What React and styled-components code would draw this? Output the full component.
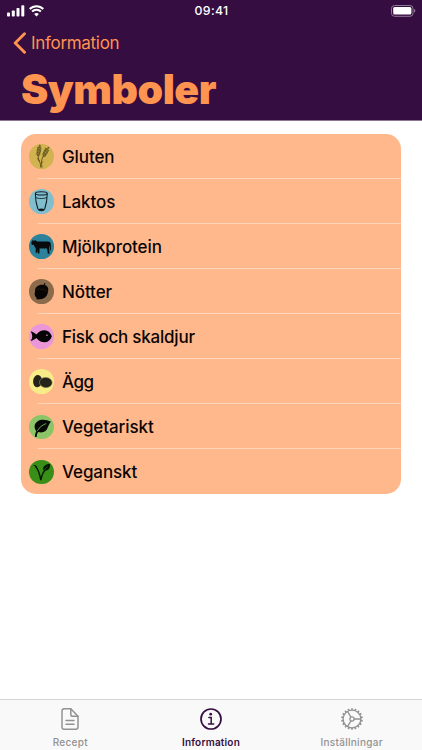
import React from "react";
import styled, { createGlobalStyle } from "styled-components";

const GlobalStyle = createGlobalStyle`
  * {
    box-sizing: border-box;
  }

  body {
    margin: 0;
    background: #fff;
    font-family: Inter, "Liberation Sans", sans-serif;
  }
`;

const Screen = styled.div`
  width: 100%;
  height: 100vh;
  display: flex;
  flex-direction: column;
  overflow: hidden;
`;

const Header = styled.header`
  height: 121px;
  flex: none;
  background: #350d40;
  border-bottom: 1px solid #8c7792;
`;

const StatusBar = styled.div`
  height: 21px;
  padding: 0 6px 0 7px;
  display: grid;
  grid-template-columns: 1fr auto 1fr;
  align-items: center;
  color: #fff;

  svg {
    display: block;
  }
`;

const Signal = styled.div`
  display: flex;
  gap: 4px;
`;

const Time = styled.span`
  padding-top: 1px;
  font-size: 12.3px;
  line-height: 20px;
  font-weight: 500;
  letter-spacing: 0.3px;
`;

const Battery = styled.div`
  display: flex;
  justify-content: flex-end;
`;

const BackButton = styled.button`
  height: 44px;
  padding: 0 0 0 13px;
  border: 0;
  background: none;
  display: flex;
  align-items: center;
  gap: 4px;
  color: #ff9350;
  font-family: inherit;
  font-size: 17px;
  letter-spacing: -0.3px;
`;

const Title = styled.h1`
  margin: 0;
  padding-left: 21px;
  color: #ff9350;
  font-size: 41px;
  line-height: 49px;
  font-weight: 900;
  letter-spacing: -0.5px;
`;

const Content = styled.main`
  flex: 1;
  padding: 13px 21px;
`;

const List = styled.ul`
  margin: 0;
  padding: 0;
  list-style: none;
  background: #ffb88c;
  border-radius: 15px;
  overflow: hidden;
`;

const Row = styled.li`
  height: 45.05px;
  padding-left: 8px;
  display: flex;
  align-items: center;
`;

const Symbol = styled.span`
  width: 24.6px;
  height: 24.6px;
  flex: none;
  border-radius: 50%;
  background: ${(props) => props.$color};

  svg {
    display: block;
  }
`;

const Label = styled.span`
  margin-left: 8.4px;
  color: #0b0504;
  font-size: 17px;
  font-weight: 450;
  letter-spacing: ${(props) => props.$spacing || "-0.1px"};
  white-space: nowrap;
`;

const Divider = styled.li`
  height: 1px;
  margin: -1px 0 0 17px;
  background: #ffd6bb;
`;

const TabBar = styled.nav`
  height: 51px;
  flex: none;
  display: grid;
  grid-template-columns: repeat(3, 1fr);
  background: #f9f9f9;
  border-top: 1px solid #d5d5d5;
`;

const Tab = styled.div`
  padding-top: 7px;
  display: flex;
  flex-direction: column;
  align-items: center;
  color: ${(props) => (props.$active ? "#350d40" : "#929292")};
`;

const TabLabel = styled.span`
  margin-top: 4px;
  font-size: 10px;
  line-height: 14px;
  font-weight: ${(props) => (props.$bold ? 600 : 500)};
  letter-spacing: ${(props) => props.$spacing};
`;

const Svg = ({ size = 24, children }) => (
  <svg width={size} height={size} viewBox="0 0 24 24" fill="none">
    {children}
  </svg>
);

const wheatGrains = [
  [10.4, 2.4, 12],
  [8.9, 4.5, -6],
  [10.9, 5, 24],
  [8.5, 7.1, -6],
  [10.5, 7.7, 24],
  [8.1, 9.7, -6],
  [9.8, 10.3, 24],
  [18.3, 4.4, 38],
  [16.2, 5.5, 14],
  [18, 7.1, 56],
  [15.1, 7.6, 14],
  [16.7, 9.4, 56],
  [14.1, 9.9, 14],
  [15.3, 11.5, 56],
];

const Wheat = () => (
  <Svg size={24.6}>
    {wheatGrains.map(([x, y, angle]) => (
      <ellipse
        key={`${x}-${y}`}
        cx={x}
        cy={y}
        rx="0.6"
        ry="1.6"
        fill="#9a8a3a"
        stroke="#3d3610"
        strokeWidth="0.45"
        transform={`rotate(${angle} ${x} ${y})`}
      />
    ))}
    <path
      d="M9 11.500c-.2 3 .9 4.500 1.700 6.500.5 1.500.6 3 .7 5M13.700 12c-1.100 2.600-1.700 4.500-1.500 7l.5 4M8.300 14l1.800 3M13.700 17l-1.500 1.800"
      stroke="#3d3610"
      strokeWidth="0.7"
    />
  </Svg>
);

const Glass = () => (
  <Svg size={24.6}>
    <g stroke="#0b1a20" strokeWidth="1">
      <ellipse cx="12" cy="4.300" rx="5.800" ry="1.600" />
      <path d="M6.200 4.300c0 5.500.9 10.500 2.500 15.200.4 1.400 1.300 1.700 3.300 1.700s2.900-.3 3.300-1.700c1.600-4.700 2.500-9.700 2.500-15.200" />
      <path d="M6.600 8c.9 1.700 9.900 1.700 10.800 0" strokeWidth="0.8" />
      <path d="M9.200 20c1.500-1 4.100-1 5.600 0l-.8 1H10z" fill="#0b1a20" strokeWidth="0.4" />
    </g>
  </Svg>
);

const Cow = () => (
  <Svg size={24.6}>
    <path
      fill="#070b0d"
      d="M1.900 8l1.500-.6-.7-1.500 1.900.8 1.800-.7 1.500 1.200 10.400.1c1.900 0 2.700.8 2.900 2.300l.2 5.200-.8 1.900-.4-6-.5 3 .3 5.500h-1.700l-.4-3.900-1.500-2.200-.8 1.600-1.400-.8c-1.300.5-2.600.4-3.800 0l-.3 5.200H8.500l-.2-3.400-.5 2.500H6.500l.1-4.600C5.400 12.700 5 11.700 4.800 10.500l-1.500.3-1-.8.4-1.300z"
    />
  </Svg>
);

const Nut = () => (
  <Svg size={24.6}>
    <path
      fill="#070503"
      d="M16.200 4.300c-.6.700-.7 1.300-.4 1.900 1.800.6 2.900 1.900 3 3.600.1 2-.3 4.500-1.600 6.500-1.500 2.200-3.900 3.300-6.600 3.500l-2.900.3-.5-1.700c-1.600-1.700-2.100-4.100-1.300-6.300-.5-2.400 1.200-4.900 4.100-6 1.600-.6 3.100-.6 4.400-.2.100-.8.400-1.500.8-2.100z"
    />
    <path d="M6.500 11.700c.9-2.300 2.900-2.500 4.900-1.500 2.500-.6 4.900.2 6.600 2.300" stroke="#3a2c1f" strokeWidth="0.45" />
  </Svg>
);

const Fish = () => (
  <Svg size={24.6}>
    <path
      fill="#050305"
      d="M1.600 7.100c2 .6 4 1.900 5.600 3.100 2-2.700 4.700-4.200 8.100-4.200 3.100 0 5.600 2 7 6-1.400 4-3.900 5.900-7 5.900-3.300 0-6-1.500-8.100-4.200-1.500 1.300-3.500 2.400-5.600 3 .9-1.600 1.500-3 1.600-4.700-.1-1.600-.7-3.300-1.600-4.900z"
    />
    <circle cx="17.500" cy="11" r="0.800" fill="#ea96d9" />
  </Svg>
);

const Eggs = () => (
  <Svg size={24.6}>
    <ellipse cx="8.400" cy="11.900" rx="4.400" ry="6" fill="#25221a" transform="rotate(6 8.400 11.900)" />
    <ellipse
      cx="16.400"
      cy="13.200"
      rx="6.200"
      ry="5"
      fill="#25221a"
      stroke="#8b875c"
      strokeWidth="0.600"
      transform="rotate(5 16.400 13.200)"
    />
  </Svg>
);

const Leaf = () => (
  <Svg size={24.6}>
    <path
      fill="#050805"
      d="M21.500 6.700c-1.700 1.700-2.400 3.400-3.200 5.600-1.500 4.300-5.100 5.500-9.400 4.300-.8 1.100-1.300 2.800-1.300 4.700l-1.800.2c-.1-2.200.4-4.200 1.400-5.700-2.700-3.400-2.200-7.500 1.300-9.800 3.300-2.100 8.600-1.700 13 .7z"
    />
    <path d="M8.200 15.300c2-3.300 4.800-5.600 8.500-6.900" stroke="#8bc567" strokeWidth="0.8" />
  </Svg>
);

const Sprout = () => (
  <Svg size={24.6}>
    <path d="M6.200 6c2.200 2.200 4.300 7.200 5.300 13.600 1-4.700 2.200-8.200 4.600-10.400" stroke="#071705" strokeWidth="1.400" />
    <path d="M4.500 5.400c1.300-.2 2.400.2 3 1.500" stroke="#071705" strokeWidth="1" />
    <path fill="#071705" d="M20.600 3.700c.2 4.100-1.100 6.900-5.500 6.700l-1.300-1.100c-.2-3.700 2.700-5 6.800-5.600z" />
    <path d="M14.700 9.800l3.400-3.200" stroke="#398e18" strokeWidth="0.5" />
  </Svg>
);

const items = [
  { label: "Gluten", color: "#d2b34f", icon: Wheat },
  { label: "Laktos", color: "#80bdcd", icon: Glass },
  { label: "Mjölkprotein", color: "#2d829b", icon: Cow },
  { label: "Nötter", color: "#8c6b4c", icon: Nut },
  { label: "Fisk och skaldjur", color: "#ea96d9", icon: Fish, spacing: "-0.22px" },
  { label: "Ägg", color: "#f7ec87", icon: Eggs, spacing: "-0.5px" },
  { label: "Vegetariskt", color: "#8bc567", icon: Leaf },
  { label: "Veganskt", color: "#398e18", icon: Sprout },
];

const DocumentIcon = () => (
  <Svg>
    <g stroke="currentColor" strokeWidth="1.500" strokeLinejoin="round" strokeLinecap="round">
      <path d="M12.800 1.700H6.300c-1.600 0-2.300.7-2.300 2.300v16c0 1.600.7 2.300 2.300 2.300h11.400c1.600 0 2.300-.7 2.300-2.300V9.200z" />
      <path d="M12.800 1.700v5.700c0 1.200.6 1.800 1.800 1.800H20M8 13.500h8M8 17.300h8" />
    </g>
  </Svg>
);

const InfoIcon = () => (
  <Svg>
    <circle cx="12" cy="12" r="10" stroke="currentColor" strokeWidth="1.700" />
    <circle cx="11.700" cy="7.200" r="1.350" fill="currentColor" />
    <path d="M9.900 10.600h2.300v6.100M9.500 16.900h5.200" stroke="currentColor" strokeWidth="1.500" strokeLinecap="round" />
  </Svg>
);

const GearIcon = () => (
  <Svg>
    <g stroke="currentColor" strokeWidth="1.300">
      <circle cx="12" cy="12" r="8.900" />
      <circle cx="12" cy="12" r="2.100" />
      <path d="M14 12h6.900M11 10.200L7.500 4.300M11 13.800l-3.500 5.900" />
      {Array.from({ length: 18 }, (_, i) => (
        <path key={i} d="M12 3V1.200" strokeWidth="1.700" transform={`rotate(${i * 20} 12 12)`} />
      ))}
    </g>
  </Svg>
);

function App() {
  return (
    <Screen>
      <GlobalStyle />
      <Header>
        <StatusBar>
          <Signal>
            <svg width="18" height="12" viewBox="0 0 18 12" fill="currentColor">
              <rect x="0" y="7.500" width="3" height="4" rx="0.800" />
              <rect x="4.800" y="5.500" width="3" height="6" rx="0.800" />
              <rect x="9.500" y="3" width="3" height="8.500" rx="0.800" />
              <rect x="14.300" y="0.300" width="3" height="11.200" rx="0.800" />
            </svg>
            <svg width="15" height="12" viewBox="0 0 15 12" fill="none">
              <path d="M.7 4a9.600 9.600 0 0 1 13.600 0M3.100 6.500a6.200 6.200 0 0 1 8.800 0" stroke="currentColor" strokeWidth="2" />
              <path d="M7.500 11.500L5.100 9.100a3.400 3.400 0 0 1 4.800 0z" fill="currentColor" />
            </svg>
          </Signal>
          <Time>09:41</Time>
          <Battery>
            <svg width="25" height="12" viewBox="0 0 25 12" fill="none">
              <rect x="0.500" y="0.500" width="21.500" height="10.800" rx="3" stroke="#8f7b96" />
              <rect x="2.200" y="2.100" width="18.200" height="7.500" rx="1.500" fill="#fff" />
              <path d="M23.200 4.100c1.500.5 1.500 3 0 3.600z" fill="#a293a7" />
            </svg>
          </Battery>
        </StatusBar>
        <BackButton>
          <svg width="14" height="22" viewBox="0 0 14 22" fill="none">
            <path
              d="M11.500 1.700L2.200 11l9.300 9.300"
              stroke="currentColor"
              strokeWidth="2.900"
              strokeLinecap="round"
              strokeLinejoin="round"
            />
          </svg>
          Information
        </BackButton>
        <Title>Symboler</Title>
      </Header>

      <Content>
        <List>
          {items.map(({ label, color, icon: Icon, spacing }, index) => (
            <React.Fragment key={label}>
              {index > 0 && <Divider />}
              <Row>
                <Symbol $color={color}>
                  <Icon />
                </Symbol>
                <Label $spacing={spacing}>{label}</Label>
              </Row>
            </React.Fragment>
          ))}
        </List>
      </Content>

      <TabBar>
        <Tab>
          <DocumentIcon />
          <TabLabel $spacing="0.3px">Recept</TabLabel>
        </Tab>
        <Tab $active>
          <InfoIcon />
          <TabLabel $bold $spacing="0.2px">Information</TabLabel>
        </Tab>
        <Tab>
          <GearIcon />
          <TabLabel $spacing="0.3px">Inställningar</TabLabel>
        </Tab>
      </TabBar>
    </Screen>
  );
}

export default App;
